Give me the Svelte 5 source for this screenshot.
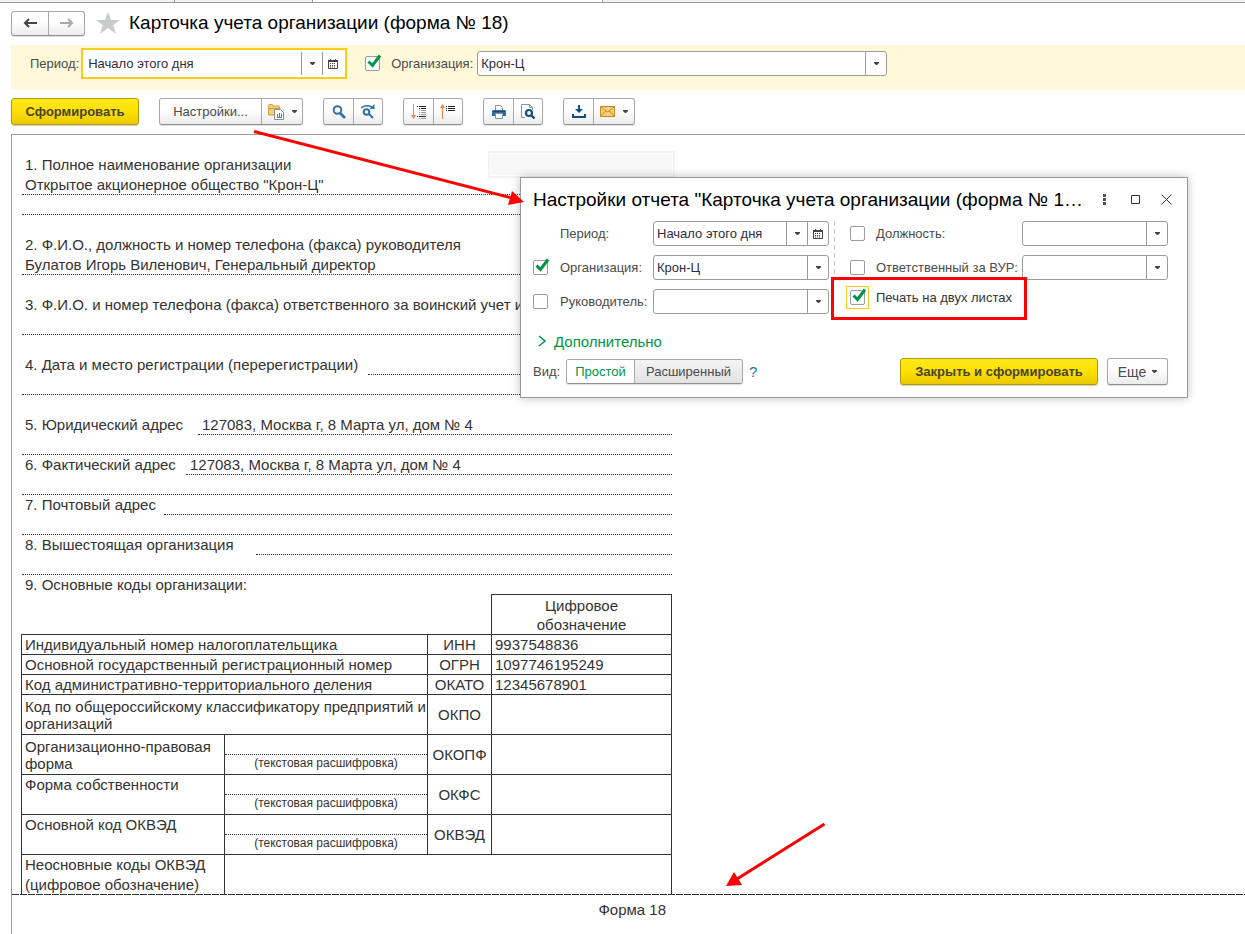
<script>
  const address = '127083, Москва г, 8 Марта ул, дом № 4';

  // Rows of the form. `line` is where the dotted underline starts: 0 is the full row.
  const rows = [
    { text: '1. Полное наименование организации' },
    { text: 'Открытое акционерное общество "Крон-Ц"', line: 0 },
    { line: 0 },
    {},
    { text: '2. Ф.И.О., должность и номер телефона (факса) руководителя' },
    { text: 'Булатов Игорь Виленович, Генеральный директор', line: 0 },
    {},
    { text: '3. Ф.И.О. и номер телефона (факса) ответственного за воинский учет и б' },
    { line: 0 },
    {},
    { text: '4. Дата и место регистрации (перерегистрации)', line: 346 },
    { line: 0 },
    {},
    { text: '5. Юридический адрес', line: 176, value: address },
    { line: 0 },
    { text: '6. Фактический адрес', line: 164, value: address },
    { line: 0 },
    { text: '7. Почтовый адрес', line: 142 },
    { line: 0 },
    { text: '8. Вышестоящая организация', line: 234 },
    { line: 0 },
    { text: '9. Основные коды организации:' },
  ];

  const codes = [
    { name: 'Индивидуальный номер налогоплательщика', code: 'ИНН', value: '9937548836' },
    { name: 'Основной государственный регистрационный номер', code: 'ОГРН', value: '1097746195249' },
    { name: 'Код административно-территориального деления', code: 'ОКАТО', value: '12345678901' },
    { name: 'Код по общероссийскому классификатору предприятий и\nорганизаций', code: 'ОКПО', value: '', tight: true },
  ];

  const decoded = [
    { name: 'Организационно-правовая\nформа', code: 'ОКОПФ', tight: true },
    { name: 'Форма собственности', code: 'ОКФС' },
    { name: 'Основной код ОКВЭД', code: 'ОКВЭД' },
  ];

  let view = $state('simple');
</script>

{#snippet calendar()}
  <svg width="10" height="10" viewBox="0 0 10 10" aria-hidden="true">
    <path d="M0.5 1.5h9v8h-9z" fill="#fff" stroke="#444" />
    <path d="M0 1h10v2H0zM2 0h1v1H2zM7 0h1v1H7z" fill="#444" />
    <path d="M2 4.5h6M2 6.5h6M2 8h6" stroke="#444" stroke-dasharray="1 1" />
  </svg>
{/snippet}

{#snippet caret()}
  <svg width="5" height="3" viewBox="0 0 5 3" aria-hidden="true">
    <path d="M0 0h5v1L3 3H2L0 1z" fill="#444" />
  </svg>
{/snippet}

{#snippet field(id, value, withCalendar)}
  <div class="field">
    <input {id} type="text" {value} />
    <button type="button" aria-label="Выбрать">{@render caret()}</button>
    {#if withCalendar}
      <button type="button" aria-label="Календарь">{@render calendar()}</button>
    {/if}
  </div>
{/snippet}

{#snippet check(id, checked, label)}
  <span class="check">
    <input {id} type="checkbox" {checked} aria-label={label} />
    <svg width="17" height="17" viewBox="0 0 17 17" aria-hidden="true">
      <path d="M3.500 7.500l4 4L15 1.500" fill="none" stroke="#009646" stroke-width="3" />
    </svg>
  </span>
{/snippet}

<div class="page">
  <div class="tabs"><span></span><span></span><span class="current"></span><span></span></div>

  <header class="head">
    <div class="group nav">
      <button type="button" aria-label="Назад">
        <svg width="14" height="10" viewBox="0 0 14 10"><path d="M14 5H2M6 1L2 5l4 4" fill="none" stroke="#444" stroke-width="2" /></svg>
      </button>
      <button type="button" aria-label="Вперед">
        <svg width="14" height="10" viewBox="0 0 14 10"><path d="M0 5h12M8 1l4 4-4 4" fill="none" stroke="#aaa" stroke-width="2" /></svg>
      </button>
    </div>
    <svg class="star" width="24" height="22" viewBox="0 0 24 22" aria-hidden="true">
      <path d="M12 0l3 8h9l-7 5 3 9-8-6-8 6 3-9-7-5h9z" fill="#c8cacc" />
    </svg>
    <h1>Карточка учета организации (форма № 18)</h1>
  </header>

  <div class="filters">
    <label for="period">Период:</label>
    <div class="focus">{@render field('period', 'Начало этого дня', true)}</div>
    {@render check('org-on', true, 'Отбор по организации')}
    <label for="org">Организация:</label>
    <div class="org">{@render field('org', 'Крон-Ц', false)}</div>
  </div>

  <div class="toolbar">
    <button type="button" class="primary run">Сформировать</button>
    <div class="group">
      <button type="button" class="settings">Настройки...</button>
      <button type="button" class="wide" aria-label="Варианты">
        <svg width="17" height="17" viewBox="0 0 17 17">
          <path d="M1.500 2.500q0-1 1-1h3l1 1.500h5q1 0 1 1v8h-11z" fill="#f3cf74" stroke="#d0a046" />
          <path d="M1.500 5.500h12" stroke="#d0a046" />
          <path d="M7.500 6.500h6l3 3v7h-9z" fill="#fff" stroke="#8090a0" />
          <path d="M10.500 11v4M10 14.500h5" stroke="#3a9a60" />
          <path d="M12.500 10v4M14.500 11v3" stroke="#e04040" />
        </svg>
        {@render caret()}
      </button>
    </div>
    <div class="group icons">
      <button type="button" aria-label="Найти">
        <svg width="14" height="14" viewBox="0 0 14 14" fill="none" stroke="#3271a8">
          <circle cx="5.500" cy="5" r="3.800" stroke-width="2" /><path d="M8 8l5 5" stroke-width="2.600" />
        </svg>
      </button>
      <button type="button" aria-label="Найти далее">
        <svg width="14" height="15" viewBox="0 0 14 15" fill="none" stroke="#3271a8">
          <circle cx="5.500" cy="8" r="2.800" stroke-width="2" /><path d="M8 10l4 4" stroke-width="2.200" />
          <path d="M0 4Q5 0 11 3" stroke-width="1.600" /><path d="M13.500 0v5H8.500z" fill="#3271a8" stroke="none" />
        </svg>
      </button>
    </div>
    <div class="group icons">
      <button type="button" aria-label="Развернуть группы">
        <svg width="16" height="16" viewBox="0 0 16 16" fill="none">
          <path d="M2.500 0v13" stroke="#f58050" /><path d="M0 11h5l-2.500 4z" fill="#f58050" />
          <path d="M6 2.500h1M8 2.500h7M8 4.500h1M10 4.500h5M6 12.500h1M8 12.500h7" stroke="#222" />
          <path d="M8 6.500h1M10 6.500h5M8 8.500h1M10 8.500h5M8 10.500h1M10 10.500h5M8 14.500h1M10 14.500h5" stroke="#999" />
        </svg>
      </button>
      <button type="button" aria-label="Свернуть группы">
        <svg width="16" height="16" viewBox="0 0 16 16" fill="none">
          <path d="M2.500 3v12" stroke="#f58050" /><path d="M0 4h5L2.500 0z" fill="#f58050" />
          <path d="M6 2.500h1M8 2.500h7M6 4.500h1M8 4.500h7M6 6.500h1M8 6.500h7" stroke="#222" />
        </svg>
      </button>
    </div>
    <div class="group icons">
      <button type="button" aria-label="Печать">
        <svg width="14" height="14" viewBox="0 0 14 14">
          <path d="M3.500 5V.5h5l2 2V5" fill="#fff" stroke="#7d93a8" />
          <path d="M1 5h12l1 1v5H0V6z" fill="#346c9e" /><path d="M1 6.500h12" stroke="#174d7c" />
          <path d="M3.500 8.500h7v5h-7z" fill="#fff" stroke="#7d93a8" />
        </svg>
      </button>
      <button type="button" aria-label="Предварительный просмотр">
        <svg width="15" height="15" viewBox="0 0 15 15" fill="none">
          <path d="M4 13.500H.5V.5h8l3 3V6M8.500.5v3h3" stroke="#7d93a8" />
          <circle cx="8" cy="9" r="3" stroke="#105080" stroke-width="2.200" /><path d="M10 11l3.500 3.500" stroke="#105080" stroke-width="2.400" />
        </svg>
      </button>
    </div>
    <div class="group icons">
      <button type="button" aria-label="Сохранить">
        <svg width="14" height="13" viewBox="0 0 14 13">
          <path d="M6 0h2v4h3L7 8 3 4h3zM0 9h2v2h10V9h2v4H0z" fill="#105080" />
        </svg>
      </button>
      <button type="button" class="wide" aria-label="Отправить">
        <svg width="15" height="11" viewBox="0 0 15 11">
          <path d="M.5.5h14v10H.5z" fill="#fbd074" stroke="#c88428" />
          <path d="M1 1l6.500 5L14 1M1 10l4.500-5M14 10L9.500 5" fill="none" stroke="#c88428" />
        </svg>
        {@render caret()}
      </button>
    </div>
  </div>

  <main class="sheet">
    <div class="blank"></div>
    <div class="form">
      {#each rows as row}
        <div class="row">
          {#if row.line}
            <span class="name" style:width="{row.line}px">{row.text}</span>
            <span class="line">{row.value ?? ''}</span>
          {:else}
            <span class:line={row.line === 0} class="full">{row.text ?? ''}</span>
          {/if}
        </div>
      {/each}

      <table>
        <colgroup><col class="c-name" /><col class="c-text" /><col class="c-code" /><col /></colgroup>
        <thead>
          <tr><td class="none" colspan="3"></td><th>Цифровое<br />обозначение</th></tr>
        </thead>
        <tbody>
          {#each codes as { name, code, value, tight }}
            <tr>
              <td colspan="2" class:tight>{name}</td>
              <td class="code">{code}</td>
              <td>{value}</td>
            </tr>
          {/each}
          {#each decoded as { name, code, tight }}
            <tr>
              <td class:tight>{name}</td>
              <td class="decode"><div class="line"></div><small>(текстовая расшифровка)</small></td>
              <td class="code">{code}</td>
              <td></td>
            </tr>
          {/each}
          <tr class="last">
            <td>Неосновные коды ОКВЭД (цифровое обозначение)</td>
            <td colspan="3"></td>
          </tr>
        </tbody>
      </table>
    </div>
    <div class="page-break"></div>
    <p class="form-no">Форма 18</p>
  </main>

  <section class="dialog" role="dialog" aria-labelledby="dlg-title">
    <div class="title">
      <h2 id="dlg-title">Настройки отчета "Карточка учета организации (форма № 1…</h2>
      <button type="button" aria-label="Меню">
        <svg width="3" height="11" viewBox="0 0 3 11"><path d="M0 0h3v3H0zM0 4h3v3H0zM0 8h3v3H0z" fill="#555" /></svg>
      </button>
      <button type="button" aria-label="Развернуть">
        <svg width="9" height="9" viewBox="0 0 9 9"><path d="M.5.5h8v8h-8z" fill="none" stroke="#333" /></svg>
      </button>
      <button type="button" aria-label="Закрыть">
        <svg width="11" height="11" viewBox="0 0 11 11"><path d="M.5.5l10 10M10.500.5l-10 10" stroke="#333" /></svg>
      </button>
    </div>

    <div class="params">
      <div class="left">
        <span></span>
        <label for="d-period">Период:</label>
        {@render field('d-period', 'Начало этого дня', true)}
        {@render check('d-org-on', true, 'Отбор по организации')}
        <label for="d-org">Организация:</label>
        {@render field('d-org', 'Крон-Ц', false)}
        {@render check('d-head-on', false, 'Отбор по руководителю')}
        <label for="d-head">Руководитель:</label>
        {@render field('d-head', '', false)}
      </div>
      <div class="right">
        {@render check('d-post-on', false, 'Отбор по должности')}
        <label for="d-post">Должность:</label>
        {@render field('d-post', '', false)}
        {@render check('d-resp-on', false, 'Отбор по ответственному')}
        <label for="d-resp">Ответственный за ВУР:</label>
        {@render field('d-resp', '', false)}
        <div class="ring">{@render check('two-sheets', true, 'Печать на двух листах')}</div>
        <label class="dark" for="two-sheets">Печать на двух листах</label>
      </div>
      <div class="mark"></div>
    </div>

    <button type="button" class="more">
      <svg width="8" height="12" viewBox="0 0 8 12" aria-hidden="true"><path d="M1 1l6 5-6 5" fill="none" stroke="#009646" stroke-width="1.500" /></svg>
      Дополнительно
    </button>

    <div class="foot">
      <span class="view-label">Вид:</span>
      <div class="group view">
        <button type="button" class:on={view === 'simple'} onclick={() => view = 'simple'}>Простой</button>
        <button type="button" class:on={view === 'full'} onclick={() => view = 'full'}>Расширенный</button>
      </div>
      <a href="#help">?</a>
      <button type="button" class="primary close">Закрыть и сформировать</button>
      <button type="button" class="plain">Еще {@render caret()}</button>
    </div>
  </section>

  <svg class="arrows" width="840" height="900" viewBox="0 0 840 900" aria-hidden="true">
    <path d="M254 131.500L512 198M824.500 824L737 879" stroke="#f00" stroke-width="3" />
    <path d="M524 202l-12-11-4 14zM726 886l8-14 8 13z" fill="#f00" />
  </svg>
</div>

<style>
  :global(body) {
    margin: 0;
    background: #fff;
  }

  .page {
    position: relative;
    display: flex;
    flex-direction: column;
    min-height: 100vh;
    overflow: hidden;
    font-family: "Liberation Sans", Arial, sans-serif;
    font-size: 13px;
    color: #4a4a4a;
  }

  button, input {
    font: inherit;
    color: inherit;
    margin: 0;
    padding: 0;
    box-sizing: border-box;
  }

  .tabs {
    display: flex;
    height: 2px;
    background: #f2f2f2;
    border-bottom: 1px solid #9a9a9a;
  }
  .tabs span { width: 137px; border-right: 1px solid #9a9a9a; }
  .tabs span:first-child { width: 174px; }
  .tabs .current { width: 289px; background: #fff; }
  .tabs span:last-child { border: none; }

  .head {
    display: flex;
    align-items: center;
    height: 40px;
    padding: 0 0 2px 11px;
  }
  h1, h2 {
    margin: 0;
    font-size: 19px;
    font-weight: normal;
    color: #000;
  }
  .star { margin: 0 9px 0 11px; }

  .group, .plain {
    display: flex;
    height: 27px;
    box-sizing: border-box;
    border: 1px solid #a8a8a8;
    border-bottom-color: #8f8f8f;
    border-radius: 3px;
    background: linear-gradient(#fff 40%, #ebebeb);
    box-shadow: 0 1px 1px #ddd;
  }
  .group button {
    display: flex;
    align-items: center;
    justify-content: center;
    border: none;
    background: none;
  }
  .group button + button { border-left: 1px solid #a8a8a8; }
  .group.nav { height: 25px; }
  .nav button { width: 36px; }
  .icons button { width: 29px; }
  .group .wide { width: 41px; gap: 8px; }
  .group .settings { width: 101px; }

  .primary {
    height: 27px;
    border: 1px solid #b39a00;
    border-radius: 3px;
    background: linear-gradient(#ffe91e, #fce000 50%, #ebc900);
    box-shadow: 0 1px 1px #ccc;
    font-weight: bold;
    color: #4a4330;
  }
  .run { width: 128px; }

  .filters {
    display: flex;
    align-items: center;
    height: 37px;
    margin-left: 11px;
    padding: 0 0 7px 19px;
    background: #fff9da;
  }
  .focus {
    width: 260px;
    margin: 0 18px 0 2px;
    padding: 1px;
    border: 2px solid #fbcb1e;
    background: #fff;
  }
  .focus .field { border-color: #fff; }
  .filters .check { margin-right: 11px; }
  .org { width: 410px; margin-left: 4px; }

  .field {
    display: flex;
    height: 25px;
    box-sizing: border-box;
    border: 1px solid #9c9c9c;
    border-radius: 3px;
    background: #fff;
    overflow: hidden;
  }
  .field input {
    flex: 1;
    min-width: 0;
    padding-left: 3px;
    border: none;
    outline: none;
    background: none;
    color: #2d2d40;
  }
  .field button {
    display: flex;
    align-items: center;
    justify-content: center;
    width: 21px;
    border: none;
    border-left: 1px solid #9c9c9c;
    background: none;
  }

  .check {
    position: relative;
    display: block;
    width: 15px;
    height: 15px;
  }
  .check input {
    display: block;
    appearance: none;
    width: 15px;
    height: 15px;
    border: 1px solid #9c9c9c;
    border-radius: 2px;
    background: #fff;
  }
  .check svg {
    display: none;
    position: absolute;
    left: 0;
    top: -2px;
    pointer-events: none;
  }
  .check input:checked + svg { display: block; }

  .toolbar {
    display: flex;
    gap: 20px;
    padding: 9px 11px;
  }

  .sheet {
    position: relative;
    flex: 1;
    margin-left: 11px;
    padding-top: 20px;
    border: solid #9a9a9a;
    border-width: 1px 0 0 1px;
    font-size: 15px;
    color: #333;
  }
  .blank {
    position: absolute;
    left: 476px;
    top: 16px;
    width: 183px;
    height: 23px;
    border: 2px solid #f2f2f2;
    outline: 1px solid #fff;
    outline-offset: -3px;
    background: #f8f8f8;
  }
  .form { width: 650px; margin-left: 10px; }
  .row {
    display: flex;
    height: 20px;
    line-height: 20px;
    white-space: nowrap;
  }
  .row span {
    box-sizing: border-box;
    padding-left: 3px;
  }
  .row .name { flex: none; }
  .row .line { padding-left: 4px; }
  .row .full { flex: 1; padding-left: 3px; }
  .line { flex: 1; border-bottom: 1px dotted #333; }

  table {
    width: 651px;
    margin: -1px 0 -1px -1px;
    border-collapse: collapse;
    table-layout: fixed;
    line-height: 18px;
  }
  .c-name, .c-text { width: 203px; }
  .c-code { width: 64px; }
  td, th {
    padding: 1px 3px 0;
    border: 1px solid #333;
    font-weight: normal;
    vertical-align: top;
  }
  th { line-height: 19px; }
  .none { border: none; }
  .tight {
    height: 36px;
    padding-top: 3px;
    line-height: 17px;
    white-space: pre;
  }
  .code { padding: 1px 0 0; text-align: center; vertical-align: middle; }
  .decode { padding: 0 0 2px; text-align: center; }
  .decode .line { height: 19px; }
  small { display: block; font-size: 12px; line-height: 17px; }
  .last td { padding-top: 0; border-bottom: none; line-height: 20px; }

  .page-break {
    position: relative;
    height: 1px;
    background: repeating-linear-gradient(90deg, #333 0 7px, #fff 7px 8px);
  }
  .form-no {
    width: 654px;
    margin: 5px 0 0;
    line-height: 20px;
    text-align: right;
  }

  .dialog {
    position: absolute;
    left: 520px;
    top: 177px;
    width: 668px;
    box-sizing: border-box;
    padding: 0 19px 12px 12px;
    border: 1px solid #999;
    background: #fff;
    box-shadow: 0 0 9px rgba(0, 0, 0, 0.25);
  }
  .title {
    display: flex;
    align-items: center;
    height: 43px;
    margin-right: -14px;
  }
  h2 {
    flex: 1;
    white-space: nowrap;
  }
  .title button {
    display: flex;
    flex: none;
    align-items: center;
    justify-content: center;
    width: 31px;
    height: 24px;
    border: none;
    background: none;
  }

  .params {
    position: relative;
    display: flex;
    justify-content: space-between;
  }
  .left, .right {
    display: grid;
    align-items: center;
    align-content: start;
    gap: 9px 0;
  }
  .left { grid-template-columns: 27px 93px 176px; }
  .right {
    grid-template-columns: 26px 146px 146px;
    padding-left: 16px;
    background: repeating-linear-gradient(#ccc 0 5px, #fff 5px 8px) 0 0 / 1px 60px no-repeat;
  }
  .right label { white-space: nowrap; }
  .ring {
    width: 15px;
    margin: -3px 0 0 -4px;
    padding: 3px;
    border: 1px solid #fbcb1e;
  }
  .dark { margin-top: -3px; color: #333; }
  .mark {
    position: absolute;
    left: 298px;
    top: 56px;
    width: 190px;
    height: 37px;
    border: 3px solid #f00;
    pointer-events: none;
  }

  .more {
    display: flex;
    align-items: center;
    gap: 8px;
    height: 20px;
    margin: 17px 0 7px 5px;
    border: none;
    background: none;
    font-size: 15px;
    color: #009646;
  }

  .foot {
    display: flex;
    align-items: center;
  }
  .view-label { width: 33px; }
  .group.view { height: 25px; background: none; overflow: hidden; }
  .view button { width: 108px; background: linear-gradient(#f4f4f4, #e2e2e2); }
  .view button:first-child { width: 67px; }
  .view .on { background: #fff; color: #009646; }
  .foot a { margin-left: 6px; color: #1a75bb; text-decoration: none; font-size: 15px; }
  .close { width: 198px; margin: 0 9px 0 auto; }
  .plain {
    width: 61px;
    align-items: center;
    justify-content: center;
    gap: 6px;
    font-size: 14px;
  }

  .arrows {
    position: absolute;
    left: 0;
    top: 0;
    pointer-events: none;
  }
</style>
